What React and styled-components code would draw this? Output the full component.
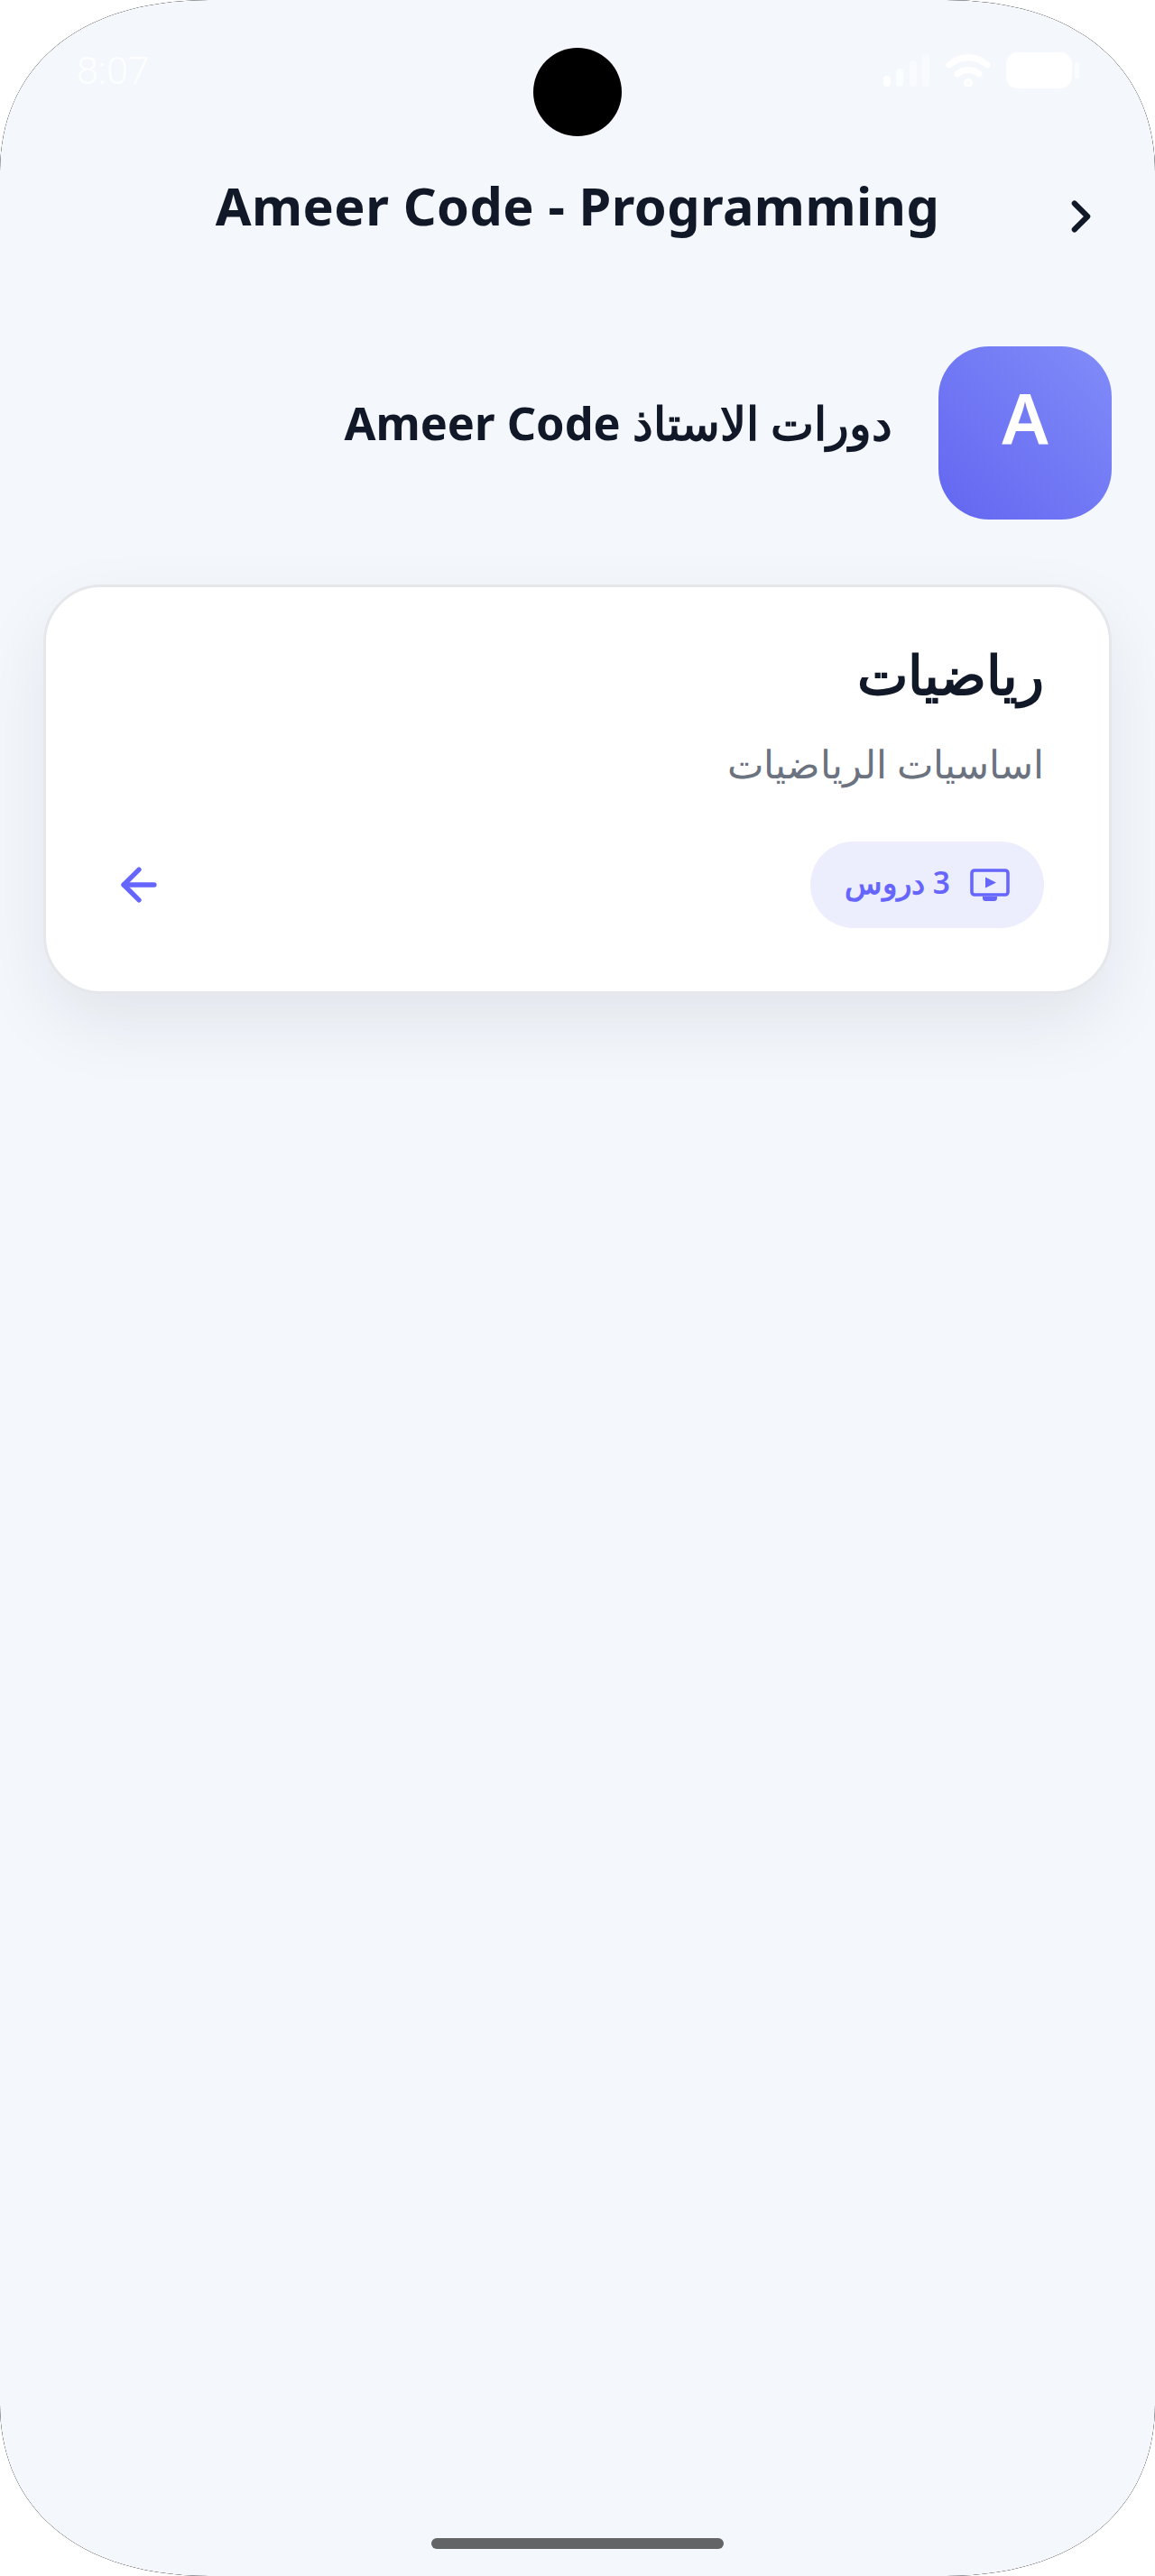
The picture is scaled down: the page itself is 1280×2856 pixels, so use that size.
import styled, { createGlobalStyle } from "styled-components";
import { ArrowLeft, ChevronRight } from "lucide-react";

const SCREEN_SHAPE =
  "M232 0 H1048 C1200 0 1280 80 1280 190 V2666 C1280 2776 1200 2856 1048 2856 H232 C80 2856 0 2776 0 2666 V190 C0 80 80 0 232 0 Z";

const GlobalStyle = createGlobalStyle`
  html, body {
    margin: 0;
    padding: 0;
    background: #fff;
  }
  * {
    box-sizing: border-box;
  }
`;

const Device = styled.div`
  width: 1280px;
  height: 2856px;
  background: #000;
  clip-path: path("${SCREEN_SHAPE}");
`;
const Screen = styled.div`
  position: relative;
  height: 100%;
  overflow: hidden;
  background: #f4f7fc;
  clip-path: path("${SCREEN_SHAPE}");
  font-family: "Noto Sans", sans-serif;
  color: #111827;
`;
const Camera = styled.div`
  position: absolute;
  top: 53px;
  left: 591px;
  width: 98px;
  height: 98px;
  border-radius: 50%;
  background: #000;
`;
const StatusBar = styled.div`
  display: flex;
  justify-content: space-between;
  align-items: center;
  height: 156px;
  padding: 0 84px 0 85px;
`;
const Time = styled.span`
  font-family: "Roboto", sans-serif;
  font-size: 43px;
  font-weight: 300;
  color: rgba(255, 255, 255, 0.95);
`;
const StatusIcons = styled.div`
  display: flex;
  align-items: center;
  gap: 17px;
`;
const Header = styled.header`
  display: grid;
  grid-template-columns: 1fr auto 1fr;
  align-items: center;
  height: 144px;
`;
const Title = styled.h1`
  margin: 0;
  font-size: 57.6px;
  font-weight: 700;
  line-height: 1.2;
  letter-spacing: 0.4px;
`;
const BackButton = styled.div`
  display: flex;
  justify-self: end;
  margin: 24px 53px 0 0;
  color: #111827;
`;
const Teacher = styled.section`
  display: flex;
  align-items: center;
  gap: 51px;
  margin-top: 84px;
  padding: 0 48px;
  direction: rtl;
`;
const TeacherName = styled.h2`
  margin: 0;
  padding-bottom: 24px;
  font-size: 50.5px;
  font-weight: 700;
`;
const Avatar = styled.div`
  display: flex;
  justify-content: center;
  align-items: center;
  width: 192px;
  height: 192px;
  padding-bottom: 34px;
  border-radius: 56px;
  background: linear-gradient(45deg, #6366f1, #818cf8);
  color: #fff;
  font-size: 76.8px;
  font-weight: 600;
`;
const CourseCard = styled.article`
  display: flex;
  flex-direction: column;
  height: 454px;
  margin: 72px 48px 0;
  padding: 55px 72px 70px;
  background: #fff;
  border: 3px solid #e5e7eb;
  border-radius: 64px;
  box-shadow: 0 32px 80px rgba(17, 24, 39, 0.08);
  direction: rtl;
`;
const CourseTitle = styled.h3`
  margin: 0;
  font-size: 59.5px;
  font-weight: 700;
`;
const CourseText = styled.p`
  margin: 30px 0 0;
  font-size: 43px;
  color: #6b7280;
`;
const CardFooter = styled.div`
  display: flex;
  justify-content: space-between;
  align-items: center;
  margin-top: auto;
`;
const LessonsBadge = styled.div`
  display: flex;
  align-items: center;
  gap: 22px;
  height: 96px;
  padding: 0 38px;
  border-radius: 48px;
  background: #ecedfd;
  color: #6666ff;
  font-size: 33.5px;
  font-weight: 600;
`;
const BadgeLabel = styled.span`
  padding-bottom: 7px;
`;
const ForwardLink = styled.div`
  display: flex;
  margin-left: 2px;
  color: #6666ff;
`;
const HomeBar = styled.div`
  position: absolute;
  bottom: 30px;
  left: 478px;
  width: 324px;
  height: 12px;
  border-radius: 6px;
  background: #636466;
`;

function SignalIcon() {
  return (
    <svg width="52" height="36" viewBox="0 0 52 36" fill="#fff">
      <rect x="0" y="24" width="8" height="12" rx="4" />
      <rect x="14" y="16" width="8" height="20" rx="4" opacity="0.75" />
      <rect x="29" y="7" width="8" height="29" rx="4" opacity="0.55" />
      <rect x="43" y="0" width="8" height="36" rx="4" opacity="0.4" />
    </svg>
  );
}

function WifiIcon() {
  return (
    <svg width="50" height="36" viewBox="0 0 50 36" fill="none" stroke="#fff" strokeWidth="7" strokeLinecap="round">
      <path d="M4 12C16 1 34 1 46 12" />
      <path d="M13 22C20 16 30 16 37 22" />
      <circle cx="25" cy="32" r="1.5" fill="#fff" />
    </svg>
  );
}

function BatteryIcon() {
  return (
    <svg width="81" height="40" viewBox="0 0 81 40" fill="#fff">
      <rect x="0" y="0" width="73" height="40" rx="13" />
      <rect x="76" y="11" width="5" height="18" rx="2.5" opacity="0.6" />
    </svg>
  );
}

function TvPlayIcon() {
  return (
    <svg width="44" height="36" viewBox="0 0 44 36" fill="none">
      <rect x="2" y="2" width="40" height="27" rx="3" stroke="currentColor" strokeWidth="3.6" />
      <path d="M17 9.5L29 15.5L17 21.5Z" fill="currentColor" />
      <path d="M14 31H30V33C30 34.5 29 36 27 36H17C15 36 14 34.5 14 33Z" fill="currentColor" />
    </svg>
  );
}

export default function App() {
  return (
    <>
      <GlobalStyle />
      <Device>
        <Screen>
          <StatusBar>
            <Time>8:07</Time>
            <StatusIcons>
              <SignalIcon />
              <WifiIcon />
              <BatteryIcon />
            </StatusIcons>
          </StatusBar>
          <Camera />
          <Header>
            <span />
            <Title>Ameer Code - Programming</Title>
            <BackButton>
              <ChevronRight size={58} strokeWidth={2.5} />
            </BackButton>
          </Header>
          <Teacher>
            <Avatar>A</Avatar>
            <TeacherName>دورات الاستاذ Ameer Code</TeacherName>
          </Teacher>
          <CourseCard>
            <CourseTitle>رياضيات</CourseTitle>
            <CourseText>اساسيات الرياضيات</CourseText>
            <CardFooter>
              <LessonsBadge>
                <TvPlayIcon />
                <BadgeLabel>3 دروس</BadgeLabel>
              </LessonsBadge>
              <ForwardLink>
                <ArrowLeft size={58} strokeWidth={2.2} />
              </ForwardLink>
            </CardFooter>
          </CourseCard>
          <HomeBar />
        </Screen>
      </Device>
    </>
  );
}
